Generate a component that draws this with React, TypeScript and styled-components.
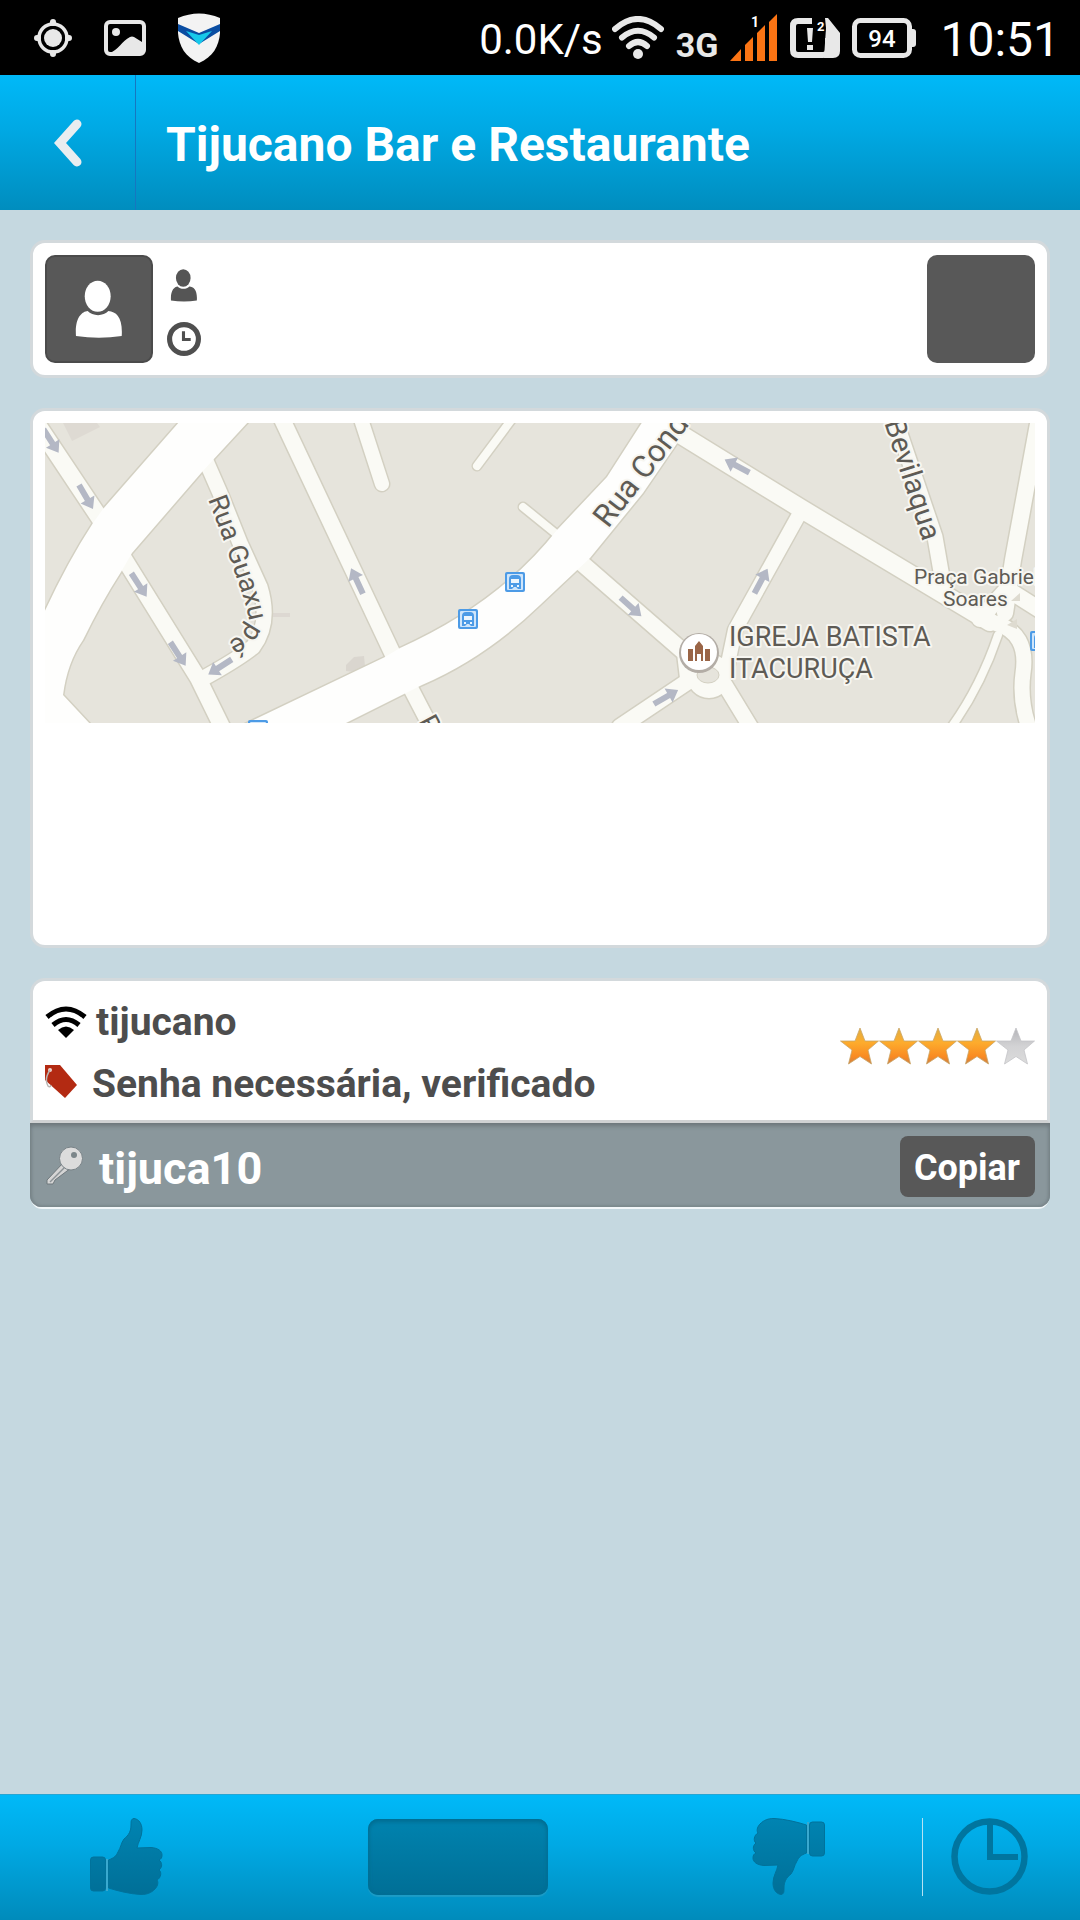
import React from "react";
import styled, { createGlobalStyle } from "styled-components";

const GlobalStyle = createGlobalStyle`
  *, *::before, *::after { box-sizing: border-box; }
  html, body, #root { height: 100%; }
  body {
    margin: 0;
    background: #c5d8e0;
    font-family: Roboto, "Noto Sans", sans-serif;
    color: #4d4d4d;
  }
  button { font: inherit; color: inherit; border: 0; padding: 0; background: none; cursor: pointer; }
  svg { display: block; flex: none; }
`;

const Screen = styled.div`
  min-height: 100%;
  display: flex;
  flex-direction: column;
`;

const StatusBar = styled.div`
  height: 75px;
  padding: 0 20px 0 34px;
  display: flex;
  align-items: center;
  justify-content: space-between;
  background: #000;
  color: #fff;
`;

const StatusGroup = styled.div<{ $gap: number }>`
  display: flex;
  align-items: center;
  gap: ${(p) => p.$gap}px;
`;

const StatusText = styled.span<{ $size: number }>`
  padding-top: 4px;
  font-size: ${(p) => p.$size}px;
  line-height: 60px;
  white-space: nowrap;
`;

const NetworkType = styled.span`
  padding-top: 14px;
  font-size: 34px;
  line-height: 40px;
  font-weight: 700;
  color: #e8e8e8;
`;

const Clock = styled(StatusText)`
  padding-left: 12px;
`;

const Header = styled.header`
  height: 135px;
  display: flex;
  align-items: stretch;
  background: linear-gradient(#00b9f8, #00a9e4 40%, #008dbe);
  color: #fff;
`;

const BackButton = styled.button`
  width: 136px;
  display: grid;
  place-items: center;
  border-right: 1px solid #1677c0;
`;

const Title = styled.h1`
  margin: 0;
  padding: 4px 30px 0;
  align-self: center;
  font-size: 48px;
  line-height: 60px;
  font-weight: 700;
`;

const Content = styled.main`
  flex: 1;
  padding: 30px;
  display: flex;
  flex-direction: column;
  gap: 30px;
`;

const Card = styled.section`
  border: 3px solid #d3d9dc;
  border-radius: 15px;
  background: #fff;
`;

const UserCard = styled(Card)`
  padding: 12px;
  display: flex;
  gap: 14px;
`;

const Avatar = styled.div`
  width: 108px;
  height: 108px;
  border: 2px solid #4b4b4b;
  border-radius: 10px;
  background: #585858;
  display: grid;
  place-items: center;
`;

const UserFacts = styled.div`
  flex: 1;
  display: flex;
  flex-direction: column;
  justify-content: space-between;
  padding: 14px 0 7px;
`;

const FactIcon = styled.span`
  width: 34px;
  display: grid;
  place-items: center;
`;

const ActionSquare = styled.button`
  width: 108px;
  height: 108px;
  border-radius: 10px;
  background: #585858;
`;

const MapCard = styled(Card)`
  padding: 12px;
  min-height: 540px;
`;

const MapDrawing = styled.svg`
  width: 100%;
  height: auto;
`;

const NetworkBlock = styled.section`
  display: flex;
  flex-direction: column;
`;

const NetworkCard = styled(Card)`
  padding: 12px 12px 7px;
  border-bottom-color: #d0d2d3;
  border-radius: 15px 15px 0 0;
  display: flex;
  align-items: center;
  justify-content: space-between;
`;

const NetworkLines = styled.div`
  display: grid;
  gap: 4px;
`;

const NetworkLine = styled.div<{ $gap: number }>`
  display: flex;
  align-items: center;
  gap: ${(p) => p.$gap}px;
  font-size: 39px;
  line-height: 58px;
  font-weight: 700;
`;

const Stars = styled.div`
  display: flex;
`;

const PasswordBar = styled.div`
  height: 84px;
  padding: 3px 15px 0;
  display: flex;
  align-items: center;
  border-radius: 0 0 12px 12px;
  background: #8a979c;
  box-shadow: inset 0 4px 4px -1px #6d777b, inset 3px 0 3px -1px #7b888d,
    inset -3px 0 3px -1px #7b888d, inset 0 -3px 2px -1px #7f8b90, 0 3px 0 -1px #f2f7f9;
`;

const Password = styled.span`
  flex: 1;
  padding: 4px 0 0 15px;
  font-size: 45px;
  line-height: 60px;
  font-weight: 700;
  color: #fff;
`;

const CopyButton = styled.button`
  && {
    height: 61px;
    padding: 3px 15px 0 14px;
    border-radius: 8px;
    background: #585858;
    color: #fff;
    font-size: 36px;
    font-weight: 700;
  }
`;

const Footer = styled.footer`
  height: 126px;
  padding-bottom: 2px;
  display: flex;
  align-items: center;
  border-top: 1px solid #27a5d2;
  background: linear-gradient(#00b9f8, #00a9e4 40%, #008bbb);
`;

const Votes = styled.div`
  flex: 1;
  padding: 0 97px 0 90px;
  display: flex;
  align-items: center;
  justify-content: space-between;
`;

const VoteCount = styled.button`
  && {
    width: 180px;
    height: 76px;
    border-radius: 10px;
    background: linear-gradient(#0083af, #006f96);
    box-shadow: inset 0 3px 4px #006e93, inset 0 0 4px #006e93, 0 2px 1px #1c9cc6;
  }
`;

const History = styled.div`
  height: 78px;
  padding: 0 52px 0 28px;
  display: flex;
  align-items: center;
  border-left: 1px solid #b5e2f3;
`;

const PERSON_BODY =
  "M167 318C163 262 185 243 203 241C218 258 252 258 267 241C292 243 312 262 308 318Q238 328 167 318Z";

function Person({ width, height, color }: { width: number; height: number; color: string }) {
  return (
    <svg width={width} height={height} viewBox="164 146 148 180" fill={color} aria-hidden="true">
      <ellipse cx="234" cy="195" rx="40" ry="48" />
      <path d={PERSON_BODY} />
    </svg>
  );
}

function ThumbIcon({ down = false }: { down?: boolean }) {
  const id = down ? "thumb-down" : "thumb-up";
  return (
    <svg width="73" height="77" viewBox="0 0 73 77" aria-hidden="true">
      <defs>
        <linearGradient id={id} gradientUnits="userSpaceOnUse" x1="0" x2="0" y1={down ? 77 : 0} y2={down ? 0 : 77}>
          <stop offset="0" stopColor="#0084b2" />
          <stop offset="1" stopColor="#006f97" />
        </linearGradient>
      </defs>
      <g transform={down ? "rotate(180 36.5 38.5)" : undefined} fill={`url(#${id})`} stroke="#00729b" strokeWidth="1">
        <path d="M17 41V73" stroke="#39a9cf" strokeWidth="2" />
        <rect x="0.5" y="39" width="15" height="34" rx="3" />
        <path d="M18.500 42C24 40 26 38 28 34C31 29 31 25 34 21C39 17 41 13 41 7C41 3 41 1 44 0.5C49 1 52 6 52 12C52 19 48 24 47 30L61 29.500C68 30 72 33 72 37C72 40 71 41 69 42C72 44 73 49 69 52C72 54 71 60 67 62C69 65 67 69 65 71C61 75 57 76.500 51 76.500C40 76 28 73 18.500 70Z" />
      </g>
    </svg>
  );
}

function Star({ filled }: { filled: boolean }) {
  return (
    <svg width="39" height="52" viewBox="0 0 39 52" aria-hidden="true">
      <defs>
        <linearGradient id="star-on" x1="0" x2="0" y1="0" y2="1">
          <stop offset="0" stopColor="#dfae45" />
          <stop offset="0.4" stopColor="#fdac2d" />
          <stop offset="0.8" stopColor="#f98a22" />
          <stop offset="1" stopColor="#c98146" />
        </linearGradient>
        <linearGradient id="star-off" x1="0" x2="0" y1="0" y2="1">
          <stop offset="0" stopColor="#b4b4b8" />
          <stop offset="0.5" stopColor="#d2d2d4" />
          <stop offset="1" stopColor="#dcdcdc" />
        </linearGradient>
      </defs>
      <path
        d="M20 1L25 14H38.500L28 23L31.500 37L20 29.500L8.500 37L12 23L0.500 14H15Z"
        fill={filled ? "url(#star-on)" : "url(#star-off)"}
        stroke={filled ? "#c9a668" : "#c4c4c8"}
        strokeWidth="0.8"
      />
    </svg>
  );
}

const ARROWS: [number, number, number][] = [
  [6, 18, 57], [41, 74, 60], [94, 162, 57], [133, 231, 57], [175, 244, 147], [312, 158, -115],
  [692, 43, 208], [716, 158, -62], [586, 184, 42], [621, 274, -30],
];

const STOPS: [number, number][] = [[470, 159], [423, 196], [213, 307], [995, 218]];

const ROADS: { d: string; w: number }[] = [
  { d: "M-10 -2L60 103", w: 17 },
  { d: "M161 38L175 70L195 120L215 164Q226 200 208 224Q190 238 155 257", w: 15 },
  { d: "M78 134L153 255L180 310", w: 16 },
  { d: "M236 -6L352 240", w: 16 },
  { d: "M314 -10L337 61", w: 14 },
  { d: "M470 -8L432 43", w: 8 },
  { d: "M478 84L515 114", w: 8 },
  { d: "M364 262L390 312", w: 15 },
  { d: "M630 8L755 85L945 199", w: 18 },
  { d: "M756 88L690 207L681 250", w: 14 },
  { d: "M532 136L640 230L643 255", w: 16 },
  { d: "M648 255L575 304", w: 16 },
  { d: "M680 262L708 308", w: 15 },
  { d: "M848 -10L890 114L898 160", w: 15 },
  { d: "M995 -10L968 137L960 190", w: 16 },
  { d: "M953 212Q935 265 905 306", w: 8 },
  { d: "M950 200Q984 210 978 250Q974 280 986 310", w: 15 },
  { d: "M935 196L962 166L1000 190", w: 16 },
];

const AVENUES = [
  "M135 -2L58 86L48 100Q22 140 -2 192V302H46L18 272Q22 240 38 217Q56 180 76 149L87 130L157 49L168 37L204 -2Z",
  "M198 302L340 234L355 225Q455 180 512 107L562 54L598 -2H645L633 19L598 70L545 135L495 182Q440 235 377 262L297 302Z",
];

function StreetMap() {
  return (
    <MapDrawing viewBox="0 0 990 300" role="img" aria-label="Mapa">
      <defs>
        <clipPath id="map-frame"><rect width="990" height="300" /></clipPath>
        <path id="guaxupe" d="M163 76Q178 115 190 150Q200 178 203 192Q205 206 190 215L160 231" />
      </defs>
      <g clipPath="url(#map-frame)">
        <rect width="990" height="300" fill="#e6e4dc" />
        <path d="M18 0H52L55 4L27 18Z" fill="#dedad3" />
        <path d="M301 242L309 234L319 233L320 243L309 249L301 248Z" fill="#dad6cf" />
        <path d="M226 190H245V194H226Z" fill="#ddd8d2" />
        <g fill="none" stroke="#d3d0c2" strokeLinecap="round" strokeLinejoin="round">
          {ROADS.map((r) => <path key={r.d} d={r.d} strokeWidth={r.w + 3} />)}
          {AVENUES.map((d) => <path key={d} d={d} strokeWidth="3" />)}
          <circle cx="664" cy="253" r="14" strokeWidth="19" />
        </g>
        <g fill="none" stroke="#fafaf5" strokeLinecap="round" strokeLinejoin="round">
          {ROADS.map((r) => <path key={r.d} d={r.d} strokeWidth={r.w} />)}
          <circle cx="664" cy="253" r="14" strokeWidth="16" />
        </g>
        <g fill="#fefefd">{AVENUES.map((d) => <path key={d} d={d} />)}</g>
        <ellipse cx="663" cy="252" rx="11" ry="8" fill="#e6e4dc" stroke="#d3d0c2" />
        <path d="M966 178L975 170V178Z M962 202L972 196V206Z" fill="#dedbd0" />

        <g fill="#b4b8c5">
          {ARROWS.map(([x, y, a]) => (
            <path key={`${x}-${y}`} transform={`translate(${x} ${y}) rotate(${a})`} d="M-14 -3H3V-8L14 0L3 8V3H-14Z" />
          ))}
        </g>

        {STOPS.map(([x, y]) => (
          <g key={`${x}-${y}`} transform={`translate(${x} ${y})`}>
            <rect x="-10" y="-10" width="20" height="20" rx="2" fill="#4d9be6" />
            <rect x="-8" y="-8" width="16" height="16" rx="1" fill="#cfe5fa" />
            <path d="M-6 7V-3Q-6 -7 -2 -7H2Q6 -7 6 -3V7H3L1 5H-1L-3 7Z" fill="#4d9be6" />
            <path d="M-4 -3H4V1H-4Z M-4 3H-2V5H-4Z M2 3H4V5H2Z" fill="#eef6fd" />
          </g>
        ))}

        <circle cx="654" cy="230" r="20" fill="#b3ada6" />
        <circle cx="654" cy="229" r="18" fill="#fff" />
        <path d="M643 226H648V238H643Z M650 238V223L654 218L658 223V238H656V231H652V238Z M660 226H665V238H660Z" fill="#9a6547" />

        <g fill="#5e5b55" stroke="#f7f6f1" strokeWidth="4" strokeLinejoin="round" paintOrder="stroke">
          <text fontSize="27" x="684" y="223">IGREJA BATISTA</text>
          <text fontSize="27" x="684" y="255">ITACURUÇA</text>
          <text fontSize="21" x="869" y="161">Praça Gabriel</text>
          <text fontSize="21" x="898" y="183">Soares</text>
          <text fontSize="31" transform="translate(563 106) rotate(-52)">Rua Conde</text>
          <text fontSize="29" textAnchor="end" transform="translate(878 119) rotate(72)">Bevilaqua</text>
          <text fontSize="27"><textPath href="#guaxupe">Rua Guaxupé</textPath></text>
          <text fontSize="27" transform="translate(373 298) rotate(62)">Rua</text>
        </g>
      </g>
    </MapDrawing>
  );
}

export default function App() {
  return (
    <>
      <GlobalStyle />
      <Screen>
        <StatusBar>
          <StatusGroup $gap={32}>
            <svg width="38" height="38" viewBox="0 0 38 38" fill="none" stroke="#e8e8e8" aria-hidden="true">
              <circle cx="19" cy="19" r="14" strokeWidth="3.500" />
              <circle cx="19" cy="19" r="9" fill="#e8e8e8" stroke="none" />
              <path d="M19 3V4M19 34V35M3 19H4M34 19H35" strokeWidth="6" strokeLinecap="round" />
            </svg>
            <svg width="42" height="36" viewBox="0 0 42 36" aria-hidden="true">
              <rect x="2" y="2" width="38" height="32" rx="4" fill="none" stroke="#e8e8e8" strokeWidth="4" />
              <circle cx="12" cy="12" r="4" fill="#e8e8e8" />
              <path d="M6 33C14 30 18 21 26 17Q28 16 30 17L38 22V33Z" fill="#e8e8e8" />
            </svg>
            <svg width="42" height="50" viewBox="0 0 42 50" aria-hidden="true">
              <path d="M0 5Q21 -4 42 5V20C41 33 35 44 21 50C7 44 1 33 0 20Z" fill="#f3f3f3" />
              <path d="M0 11L21 20L42 11V18L21 31L0 18Z" fill="#0a4da2" />
              <path d="M8 18L21 22L34 18L21 32Z" fill="#16c8ea" />
            </svg>
          </StatusGroup>
          <StatusGroup $gap={12}>
            <StatusGroup $gap={9}>
              <StatusText $size={42}>0.0K/s</StatusText>
              <svg width="52" height="44" viewBox="0 0 52 44" fill="none" stroke="#e8e8e8" strokeWidth="6" strokeLinecap="round" aria-hidden="true">
                <path d="M3 13Q26 -7 49 13M10 21.500Q26 8 42 21.500M17 30Q26 22 35 30" />
                <circle cx="26" cy="38" r="5" fill="#e8e8e8" stroke="none" />
              </svg>
            </StatusGroup>
            <NetworkType>3G</NetworkType>
            <svg width="48" height="47" viewBox="0 0 48 47" fill="#fb7414" aria-hidden="true">
              <path d="M0 47L11 35V47ZM15 31L23 23V47H15ZM27 19L35 11V47H27ZM39 8L47 0V47H39Z" />
              <text x="21" y="13" fontSize="14" fontWeight="700" fill="#fff">1</text>
            </svg>
            <svg width="50" height="40" viewBox="0 0 50 40" aria-hidden="true">
              <path d="M22 3H8Q3 3 3 8V32Q3 37 8 37H33Q38 37 38 32V20" fill="none" stroke="#e8e8e8" strokeWidth="6" />
              <path d="M35 0H38L50 15V33Q50 40 43 40H34L36 10Z" fill="#e8e8e8" />
              <path d="M17 10H23L22 24H18ZM17 27H23V32H17Z" fill="#e8e8e8" />
              <text x="27" y="13" fontSize="13" fontWeight="700" fill="#fff" stroke="#000" strokeWidth="2" paintOrder="stroke">2</text>
            </svg>
            <svg width="64" height="40" viewBox="0 0 64 40" aria-hidden="true">
              <rect x="2.500" y="2.500" width="55" height="35" rx="6" fill="none" stroke="#e8e8e8" strokeWidth="5" />
              <path d="M60 11H61Q64 11 64 14V26Q64 29 61 29H60Z" fill="#e8e8e8" />
              <text x="30" y="29" fontSize="24" fontWeight="500" textAnchor="middle" fill="#fff">94</text>
            </svg>
            <Clock $size={48}>10:51</Clock>
          </StatusGroup>
        </StatusBar>

        <Header>
          <BackButton aria-label="Voltar">
            <svg width="28" height="48" viewBox="0 0 28 48" fill="none" aria-hidden="true">
              <path d="M23 5L6 24L23 43" stroke="#e9edf0" strokeWidth="9" strokeLinecap="round" />
            </svg>
          </BackButton>
          <Title>Tijucano Bar e Restaurante</Title>
        </Header>

        <Content>
          <UserCard>
            <Avatar><Person width={48} height={59} color="#fff" /></Avatar>
            <UserFacts>
              <FactIcon><Person width={28} height={33} color="#555" /></FactIcon>
              <FactIcon>
                <svg width="34" height="34" viewBox="0 0 33 33" fill="none" stroke="#4f4f4f" aria-hidden="true">
                  <circle cx="16.500" cy="16.500" r="14" strokeWidth="5" />
                  <path d="M16 9V17H23" strokeWidth="3" />
                </svg>
              </FactIcon>
            </UserFacts>
            <ActionSquare aria-label="Opções" />
          </UserCard>

          <MapCard>
            <StreetMap />
          </MapCard>

          <NetworkBlock>
            <NetworkCard>
              <NetworkLines>
                <NetworkLine $gap={9}>
                  <svg width="42" height="32" viewBox="0 0 42 32" fill="none" stroke="#000" strokeWidth="5" aria-hidden="true">
                    <path d="M2 11Q21 -5 40 11M8 19Q21 8 34 19" />
                    <path d="M13 24Q21 17 29 24L21 32Z" fill="#000" stroke="none" />
                  </svg>
                  tijucano
                </NetworkLine>
                <NetworkLine $gap={15}>
                  <svg width="32" height="38" viewBox="0 0 32 38" aria-hidden="true">
                    <path d="M0 0H15L32 20L20 33L0 15Z" fill="#b32a12" />
                    <circle cx="5" cy="5" r="2" fill="#f0d5cf" />
                    <path d="M5 5Q-1 14 3 21Q5 23 6 20" fill="none" stroke="#b9b4b2" strokeWidth="1.500" />
                  </svg>
                  Senha necessária, verificado
                </NetworkLine>
              </NetworkLines>
              <Stars role="img" aria-label="4 de 5 estrelas">
                {[1, 2, 3, 4, 5].map((n) => <Star key={n} filled={n <= 4} />)}
              </Stars>
            </NetworkCard>
            <PasswordBar>
              <svg width="39" height="42" viewBox="0 0 39 42" aria-hidden="true">
                <path d="M18 17L2 34L2 38L8 38L10 34L26 22Z" fill="#d5d5d5" stroke="#6f787c" strokeWidth="1" />
                <path d="M20 21L5 36" stroke="#8b9296" strokeWidth="1.500" />
                <circle cx="26" cy="12.500" r="11.500" fill="#dcdcdc" stroke="#788287" strokeWidth="1" />
                <circle cx="29" cy="9" r="3" fill="#7c868a" />
              </svg>
              <Password>tijuca10</Password>
              <CopyButton>Copiar</CopyButton>
            </PasswordBar>
          </NetworkBlock>
        </Content>

        <Footer>
          <Votes>
            <button aria-label="Gostei"><ThumbIcon /></button>
            <VoteCount aria-label="Votos" />
            <button aria-label="Não gostei"><ThumbIcon down /></button>
          </Votes>
          <History>
            <button aria-label="Histórico">
              <svg width="77" height="77" viewBox="0 0 77 77" fill="none" stroke="#00759f" aria-hidden="true">
                <circle cx="38.500" cy="38.500" r="35" strokeWidth="6.500" />
                <path d="M39 5V39H67" strokeWidth="6" />
              </svg>
            </button>
          </History>
        </Footer>
      </Screen>
    </>
  );
}
